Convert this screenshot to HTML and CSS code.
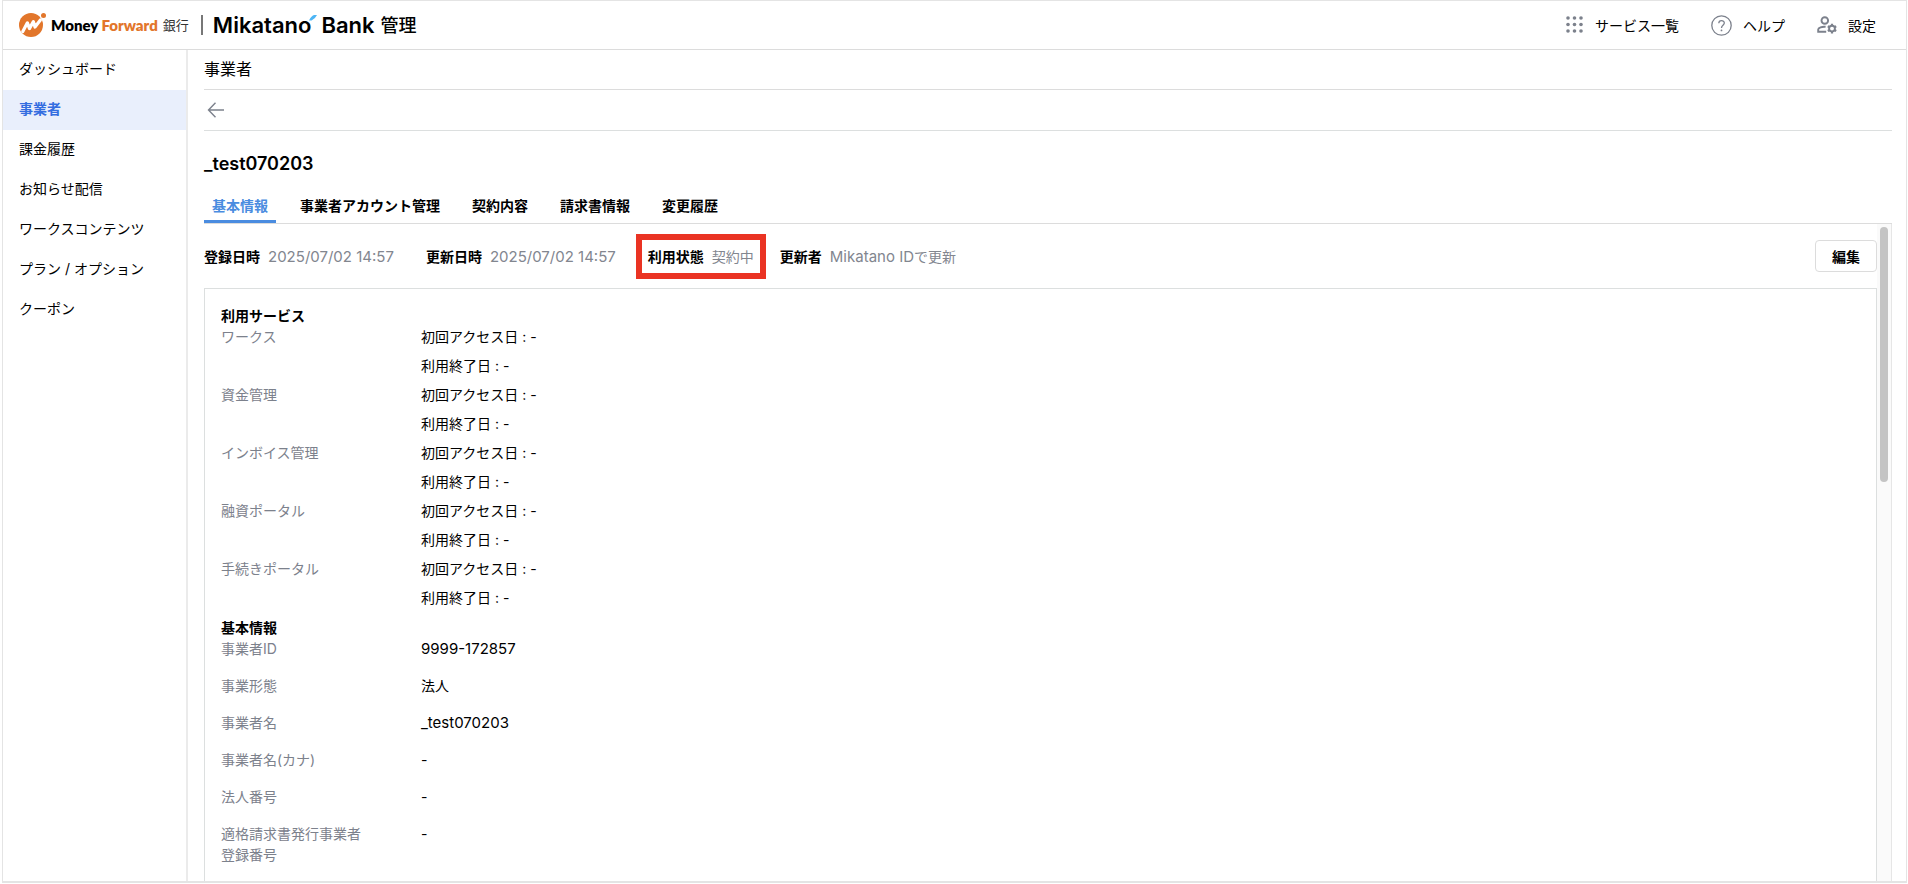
FILE: index.html
```
<!doctype html>
<html lang="ja">

  <head>
    <meta charset="utf-8">
    <title>事業者 | Mikatano Bank 管理</title>
    <link rel="stylesheet" href="styles.css">
  </head>

  <body>
    <div class="app">
      <header class="header">
        <a href="#" class="logo">
          <svg class="logo-mark" width="28" height="24" viewBox="0 0 28 24" aria-hidden="true">
            <circle cx="12" cy="12" r="12" fill="#e2762b"/>
            <circle cx="24.5" cy="2.8" r="3.4" fill="#fff"/>
            <circle cx="24.5" cy="2.5" r="2.5" fill="#e2762b"/>
            <path d="M3.8 18.6 L8.4 9.8 L10.4 15.6 L14.4 8.6 L16 14 L21.4 7" fill="none" stroke="#fff" stroke-width="3.2" stroke-linejoin="round" stroke-linecap="round"/>
          </svg>
          <span class="logo-mf">Money <span class="logo-orange">Forward</span></span>
          <span class="logo-bank">銀行</span>
          <span class="logo-divider"></span>
          <span class="logo-mikatano">Mikatano</span>
          <svg class="logo-accent" width="8" height="6" viewBox="0 0 8 6" aria-hidden="true">
            <path d="M0 5.5 Q2 1 5 0 H8 Q6 4 2.6 5.5 Z" fill="#4db5f5"/>
          </svg>
          <span class="logo-mikatano">Bank</span>
          <span class="logo-admin">管理</span>
        </a>
        <nav class="header-nav">
          <a href="#" class="header-link">
            <svg width="18" height="18" viewBox="0 0 18 18" fill="#7c818c" aria-hidden="true">
              <circle cx="2" cy="2" r="1.8"/><circle cx="8.5" cy="2" r="1.8"/><circle cx="15" cy="2" r="1.8"/>
              <circle cx="2" cy="8.5" r="1.8"/><circle cx="8.5" cy="8.5" r="1.8"/><circle cx="15" cy="8.5" r="1.8"/>
              <circle cx="2" cy="15" r="1.8"/><circle cx="8.5" cy="15" r="1.8"/><circle cx="15" cy="15" r="1.8"/>
            </svg>
            サービス一覧
          </a>
          <a href="#" class="header-link">
            <svg width="21" height="21" viewBox="0 0 21 21" fill="none" stroke="#7c818c" stroke-width="1.3" aria-hidden="true">
              <circle cx="10.5" cy="10.5" r="9.7"/>
              <path d="M7.8 8.3 C7.8 4.6 13.3 4.7 13.3 8.1 C13.3 10.3 10.5 10.4 10.5 13"/>
              <circle cx="10.5" cy="15.4" r=".9" fill="#7c818c" stroke="none"/>
            </svg>
            ヘルプ
          </a>
          <a href="#" class="header-link">
            <svg width="20" height="18" viewBox="0 0 20 18" fill="none" stroke="#7c818c" stroke-width="1.9" aria-hidden="true">
              <circle cx="7.8" cy="4.5" r="3.3"/>
              <path d="M8.6 10.8 C5 10.4 1.2 11.6 1.2 13.6 V15.7 H9.2"/>
              <circle cx="15" cy="12.6" r="2.9"/>
              <path d="M15 7.7 V9.9 M15 15.3 V17.5 M10.8 10.2 L12.7 11.3 M17.3 13.9 L19.2 15 M19.2 10.2 L17.3 11.3 M12.7 13.9 L10.8 15" stroke-width="2.2"/>
            </svg>
            設定
          </a>
        </nav>
      </header>

      <div class="layout">
        <nav class="sidebar">
          <a href="#" class="sidebar-item">ダッシュボード</a>
          <a href="#" class="sidebar-item active">事業者</a>
          <a href="#" class="sidebar-item">課金履歴</a>
          <a href="#" class="sidebar-item">お知らせ配信</a>
          <a href="#" class="sidebar-item">ワークスコンテンツ</a>
          <a href="#" class="sidebar-item">プラン / オプション</a>
          <a href="#" class="sidebar-item">クーポン</a>
        </nav>

        <main class="main">
          <h1 class="page-title">事業者</h1>
          <div class="back-bar">
            <a href="#" class="back" aria-label="戻る">
              <svg width="18" height="16" viewBox="0 0 18 16" fill="none" stroke="#7c818c" stroke-width="1.4" aria-hidden="true">
                <path d="M17 8 H1.5 M8.5 .8 L1.5 8 L8.5 15.2"/>
              </svg>
            </a>
          </div>
          <h2 class="company">_test070203</h2>

          <div class="tabs" role="tablist">
            <button type="button" role="tab" aria-selected="true" class="tab active">基本情報</button>
            <button type="button" role="tab" class="tab">事業者アカウント管理</button>
            <button type="button" role="tab" class="tab">契約内容</button>
            <button type="button" role="tab" class="tab">請求書情報</button>
            <button type="button" role="tab" class="tab">変更履歴</button>
          </div>

          <div class="pane">
            <div class="pane-body">
              <div class="summary">
                <dl class="summary-list">
                  <div class="summary-item"><dt>登録日時</dt><dd class="latin">2025/07/02 14:57</dd></div>
                  <div class="summary-item"><dt>更新日時</dt><dd class="latin">2025/07/02 14:57</dd></div>
                  <div class="summary-item marked"><dt>利用状態</dt><dd>契約中</dd></div>
                  <div class="summary-item"><dt>更新者</dt><dd><span class="latin">Mikatano ID</span>で更新</dd></div>
                </dl>
                <button type="button" class="edit">編集</button>
              </div>

              <div class="card">
                <section class="section services">
                  <h3>利用サービス</h3>
                  <dl>
                    <dt>ワークス</dt>
                    <dd>初回アクセス日 : -</dd>
                    <dd>利用終了日 : -</dd>
                    <dt>資金管理</dt>
                    <dd>初回アクセス日 : -</dd>
                    <dd>利用終了日 : -</dd>
                    <dt>インボイス管理</dt>
                    <dd>初回アクセス日 : -</dd>
                    <dd>利用終了日 : -</dd>
                    <dt>融資ポータル</dt>
                    <dd>初回アクセス日 : -</dd>
                    <dd>利用終了日 : -</dd>
                    <dt>手続きポータル</dt>
                    <dd>初回アクセス日 : -</dd>
                    <dd>利用終了日 : -</dd>
                  </dl>
                </section>
                <section class="section basic">
                  <h3>基本情報</h3>
                  <dl>
                    <dt>事業者ID</dt>
                    <dd class="latin">9999-172857</dd>
                    <dt>事業形態</dt>
                    <dd>法人</dd>
                    <dt>事業者名</dt>
                    <dd class="latin">_test070203</dd>
                    <dt>事業者名(カナ)</dt>
                    <dd>-</dd>
                    <dt>法人番号</dt>
                    <dd>-</dd>
                    <dt>適格請求書発行事業者登録番号</dt>
                    <dd>-</dd>
                  </dl>
                </section>
              </div>
            </div>
            <div class="scrollbar" aria-hidden="true"><div class="scrollbar-thumb"></div></div>
          </div>
        </main>
      </div>
    </div>
  </body>
</html>
```

FILE: styles.css
```
* {
    box-sizing: border-box;
}

body {
    margin: 0;
    background: #fff;
    color: #000;
    font-family: Inter, "Noto Sans CJK JP", sans-serif;
    font-size: 14px;
    line-height: 21px;
}

a {
    color: inherit;
    text-decoration: none;
}

h1, h2, h3, dl, dd {
    margin: 0;
}

button {
    font: inherit;
    color: inherit;
    background: none;
    border: 0;
    padding: 0;
}

.app {
    display: flex;
    flex-direction: column;
    height: calc(100vh - 1px);
    margin: 0 1px 1px 2px;
    border: 1px solid #e4e4e4;
    border-bottom-width: 2px;
    overflow: hidden;
}

/* header */
.header {
    display: flex;
    flex: none;
    align-items: center;
    justify-content: space-between;
    height: 49px;
    padding: 0 30px 0 16px;
    border-bottom: 1px solid #dcdcdc;
}

.logo, .header-nav, .header-link {
    display: flex;
    align-items: center;
}

.logo-mf {
    margin-left: 4px;
    font-family: Lato, sans-serif;
    font-size: 15px;
    font-weight: 800;
    white-space: nowrap;
}

.logo-orange {
    color: #e2762b;
}

.logo-bank {
    margin-left: 5px;
    font-size: 13px;
    color: #333;
}

.logo-divider {
    width: 2px;
    height: 20px;
    margin: 0 10px 0 12px;
    background: #777;
}

.logo-mikatano {
    font-size: 22px;
    font-weight: 600;
}

.logo-accent {
    align-self: flex-start;
    margin: 2px 4px 0 -2px;
}

.logo-admin {
    margin-left: 6px;
    font-size: 18px;
    font-weight: 500;
}

.header-nav {
    gap: 32px;
}

.header-link {
    gap: 11px;
}

/* sidebar */
.layout {
    display: flex;
    flex: 1;
    min-height: 0;
}

.sidebar {
    flex: none;
    width: 185px;
    border-right: 2px solid #ebebeb;
}

.sidebar-item {
    display: block;
    height: 40px;
    padding: 8px 16px;
}

.sidebar-item.active {
    background: #e9effc;
    color: #346de0;
    font-weight: 700;
}

/* main */
.main {
    display: flex;
    flex: 1;
    flex-direction: column;
    min-width: 0;
    padding: 0 14px 0 16px;
}

.page-title {
    flex: none;
    height: 40px;
    border-bottom: 1px solid #dcdcdc;
    font-size: 16px;
    font-weight: 400;
    line-height: 38px;
}

.back-bar {
    display: flex;
    flex: none;
    align-items: center;
    height: 41px;
    padding-left: 3px;
    border-bottom: 1px solid #dcdfdf;
}

.back {
    display: flex;
}

.company {
    margin-top: 21px;
    font-size: 18px;
    font-weight: 600;
    line-height: 24px;
}

.tabs {
    display: flex;
    flex: none;
    gap: 16px;
    height: 48px;
    padding-top: 15px;
    border-bottom: 1px solid #dcdcdc;
}

.tab {
    padding: 0 8px;
    border-bottom: 3px solid transparent;
    font-weight: 700;
}

.tab.active {
    border-color: #4a8ce0;
    color: #4a8ce0;
}

.pane {
    display: flex;
    flex: 1;
    min-height: 0;
}

.pane-body {
    flex: 1;
    min-width: 0;
    overflow: hidden;
}

.summary {
    display: flex;
    align-items: center;
    justify-content: space-between;
    height: 64px;
}

.summary-list {
    display: flex;
    align-items: center;
}

.summary-item {
    display: flex;
    gap: 8px;
    margin-right: 32px;
}

.summary-item dt {
    font-weight: 700;
}

.summary-item dd {
    color: #82868f;
}

.latin {
    font-size: 15px;
}

.summary-item.marked {
    margin-left: -12px;
    margin-right: 14px;
    padding: 6px;
    border: 6px solid #ea3323;
}

.edit {
    width: 62px;
    height: 32px;
    border: 1px solid #dcdcdc;
    border-radius: 4px;
    font-weight: 700;
}

.card {
    padding: 16px;
    border: 1px solid #dcdfdf;
}

.section h3 {
    font-size: 14px;
    font-weight: 700;
}

.section dl {
    display: grid;
    grid-template-columns: 200px 1fr;
}

.section dt {
    grid-column: 1;
    padding-right: 48px;
    color: #7c818c;
}

.section dd {
    grid-column: 2;
}

.services dl {
    row-gap: 8px;
}

.basic {
    margin-top: 9px;
}

.basic dl {
    row-gap: 16px;
}

.scrollbar {
    flex: none;
    width: 15px;
    padding: 3px;
    border-right: 1px solid #e6e6e6;
    background: #fafafa;
}

.scrollbar-thumb {
    width: 8px;
    height: 255px;
    border-radius: 4px;
    background: #c4c4c4;
}
```
